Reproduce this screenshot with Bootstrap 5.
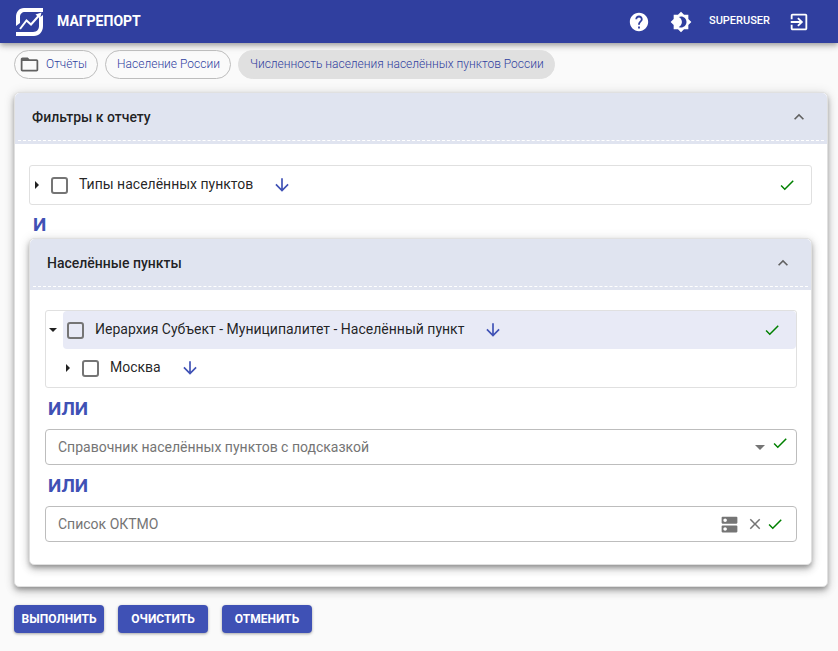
<!DOCTYPE html>
<html lang="ru">
<head>
<meta charset="utf-8">
<meta name="viewport" content="width=device-width, initial-scale=1">
<title>Магрепорт</title>
<link href="https://cdn.jsdelivr.net/npm/bootstrap@5.3.0/dist/css/bootstrap.min.css" rel="stylesheet">
<style>
body{font-family:Roboto,"Liberation Sans",sans-serif;font-size:14px;line-height:20px;background:#fafafa;color:rgba(0,0,0,.87)}
svg{display:block;flex:none;fill:currentColor}
button{font:inherit}
.topbar{height:43px;background:#303f9f;color:#fff;padding:0 28px 0 14px;box-shadow:0 2px 4px -1px rgba(0,0,0,.2),0 4px 5px rgba(0,0,0,.14),0 1px 10px rgba(0,0,0,.12)}
.brand-name{font-size:14px;font-weight:700;color:#fff;padding-left:13px;padding-bottom:2px}
.user-name{font-size:11px;font-weight:500;margin:0 18px 0 17px;padding-bottom:2px}
.bare{border:0;background:none;padding:0;color:inherit}
.crumbs{padding:7px 14px 0;gap:7px}
.crumb{height:29px;padding:0 10px 2px 11px;border:1px solid #bdbdbd;border-radius:15px;font-size:12px;font-weight:300;color:#303f9f;text-decoration:none}
.crumb-folder{padding:0 10px 2px 4px;gap:6px}
.crumb-folder svg{color:#616161;margin-top:2px}
.crumb-current{background:#e0e0e0;border-color:#e0e0e0}
.page-body{padding:13px 10px 0 14px}
.panel{background:#fff;border:1px solid #e0e0e0;border-radius:5px;box-shadow:0 3px 5px -1px rgba(0,0,0,.3),0 5px 8px rgba(0,0,0,.16),0 1px 12px rgba(0,0,0,.12)}
.panel-head{height:51px;background:#e0e4f0;border-radius:5px 5px 0 0;padding:0 3px 3px}
.panel-toggle{height:48px;padding:0 15px 0 14px;border-bottom:1px dashed #fff;font-weight:500}
.panel-toggle svg{color:#616161}
.outer-body{padding:21px 15px 21px 14px}
.inner-body{padding:20px 14px 22px 15px}
.tree{border:1px solid #e0e0e0;border-radius:3px}
.tree-row{height:38px}
.tree-item{border-radius:4px;height:38px;padding:0 15px 0 4px}
.tree-item.picked{background:#e8eaf6}
.twisty{width:17px;height:20px;padding-right:4px}
.twisty svg{margin:auto}
.tick-box{appearance:none;width:17px;height:17px;border:2px solid #757575;border-radius:3px;margin:0 11px 0 0;background:#fff;flex:none}
.picked .tick-box{background:transparent}
.tree-row label{padding-bottom:2px}
.tree-row .arrow{color:#3f51b5;margin-left:19px}
.child{padding-left:15px}
.ok{color:#008000}
.joiner{color:#3f51b5;font-size:19px;line-height:20px;font-weight:700;padding:11px 3px 10px}
.joiner-and{padding:10px 4px 3px}
.field{height:36px;border:1px solid #bdbdbd;border-radius:4px;padding:0 12px}
.field-select{padding-right:7px}
.field input{border:0;outline:0;background:none;padding:0;min-width:0;color:inherit}
.field input::placeholder{color:#757575;opacity:1}
.field button{color:#757575}
.field .gap-after{margin-right:6px}
.field .gap-small{margin-right:2px}
.actions{padding:18px 14px;gap:14px}
.act{min-width:90px;height:28px;padding:0 6px;border-radius:4px;background:#3f51b5;color:#fff;font-size:12px;font-weight:700;box-shadow:0 1px 3px rgba(0,0,0,.35)}
.act:hover{background:#303f9f;color:#fff}
</style>
<script src="https://cdn.jsdelivr.net/npm/bootstrap@5.3.0/dist/js/bootstrap.bundle.min.js"></script>
</head>
<body>
<svg class="d-none">
<symbol id="i-down" viewBox="0 0 24 24"><path d="M20 12l-1.41-1.41L13 16.17V4h-2v12.17l-5.58-5.59L4 12l8 8 8-8z"/></symbol>
<symbol id="i-ok" viewBox="0 0 24 24"><path d="M9 16.17L4.83 12l-1.42 1.41L9 19 21 7l-1.41-1.41z"/></symbol>
<symbol id="i-up" viewBox="0 0 24 24"><path d="M12 8l-6 6 1.41 1.41L12 10.83l4.59 4.58L18 14z"/></symbol>
</svg>
<header class="topbar d-flex align-items-center">
  <a href="#" class="d-flex align-items-center text-decoration-none text-white">
    <svg width="30" height="30" viewBox="0 0 30 30"><path d="M2 19V10C2 5 5 1 10 1H29V5H11C8 5 6 7 6 10V16ZM25 11L29 8V19C29 25 25 29 20 29H2V25H19C23 25 25 22 25 19Z"/><path fill="none" stroke="#fff" stroke-width="2" d="M6 22L12.500 13.500L17 17.500L25 8.500"/><path d="M21.500 7.500l6-2-1.500 6z"/></svg>
    <span class="brand-name">МАГРЕПОРТ</span>
  </a>
  <div class="d-flex align-items-center ms-auto">
    <button class="bare" aria-label="Справка"><svg width="22" height="22" viewBox="0 0 24 24"><path d="M12 2C6.480 2 2 6.480 2 12s4.480 10 10 10 10-4.480 10-10S17.520 2 12 2zm1 17h-2v-2h2v2zm2.070-7.750l-.9.920C13.450 12.900 13 13.500 13 15h-2v-.5c0-1.100.45-2.100 1.170-2.830l1.240-1.260c.37-.36.59-.86.59-1.410 0-1.100-.9-2-2-2s-2 .9-2 2H8c0-2.210 1.790-4 4-4s4 1.790 4 4c0 .88-.36 1.680-.93 2.250z"/></svg></button>
    <button class="bare ms-3 ps-1" aria-label="Тема"><svg width="22" height="22" viewBox="0 0 24 24"><path d="M20 8.690V4h-4.690L12 .69 8.690 4H4v4.690L.69 12 4 15.310V20h4.690L12 23.310 15.310 20H20v-4.690L23.310 12 20 8.690zM12 18c-.89 0-1.740-.2-2.500-.55C11.560 16.500 13 14.420 13 12s-1.440-4.500-3.500-5.450C10.260 6.200 11.110 6 12 6c3.310 0 6 2.690 6 6s-2.690 6-6 6z"/></svg></button>
    <span class="user-name">SUPERUSER</span>
    <button class="bare" aria-label="Выход"><svg width="22" height="22" viewBox="0 0 24 24"><path d="M10.090 15.590L11.500 17l5-5-5-5-1.410 1.410L12.670 11H3v2h9.670l-2.580 2.590zM19 3H5c-1.110 0-2 .9-2 2v4h2V5h14v14H5v-4H3v4c0 1.100.89 2 2 2h14c1.100 0 2-.9 2-2V5c0-1.100-.9-2-2-2z"/></svg></button>
  </div>
</header>
<nav class="crumbs d-flex flex-wrap" aria-label="Путь">
  <a href="#" class="crumb crumb-folder d-flex align-items-center"><svg width="21" height="21" viewBox="0 0 24 24"><path d="M20 6h-8l-2-2H4c-1.100 0-1.990.9-1.990 2L2 18c0 1.100.9 2 2 2h16c1.100 0 2-.9 2-2V8c0-1.100-.9-2-2-2zm0 12H4V8h16v10z"/></svg>Отчёты</a>
  <a href="#" class="crumb d-flex align-items-center">Население России</a>
  <a href="#" class="crumb crumb-current d-flex align-items-center" aria-current="page">Численность населения населённых пунктов России</a>
</nav>
<main>
<div class="page-body">
<section class="panel">
  <div class="panel-head"><button class="bare panel-toggle w-100 d-flex align-items-center justify-content-between" aria-expanded="true">Фильтры к отчету<svg width="20" height="20"><use href="#i-up"/></svg></button></div>
  <div class="outer-body">
    <div class="tree"><div class="tree-row d-flex align-items-center">
      <button class="bare twisty" aria-label="Развернуть"><svg width="4" height="8" viewBox="0 0 4 8"><path d="M0 0l4 4-4 4z"/></svg></button>
      <div class="tree-item flex-grow-1 d-flex align-items-center"><input class="tick-box" type="checkbox" id="types"><label for="types">Типы населённых пунктов</label>
      <button class="bare arrow" aria-label="Загрузить типы"><svg width="20" height="20"><use href="#i-down"/></svg></button><svg class="ok ms-auto" width="18" height="18"><use href="#i-ok"/></svg></div>
    </div></div>
    <div class="joiner joiner-and">И</div>
    <section class="panel">
      <div class="panel-head"><button class="bare panel-toggle w-100 d-flex align-items-center justify-content-between" aria-expanded="true">Населённые пункты<svg width="20" height="20"><use href="#i-up"/></svg></button></div>
      <div class="inner-body">
        <div class="tree">
          <div class="tree-row d-flex align-items-center">
            <button class="bare twisty" aria-label="Свернуть"><svg width="8" height="4" viewBox="0 0 8 4"><path d="M0 0h8L4 4z"/></svg></button>
            <div class="tree-item picked flex-grow-1 d-flex align-items-center"><input class="tick-box" type="checkbox" id="hier"><label for="hier">Иерархия Субъект - Муниципалитет - Населённый пункт</label>
            <button class="bare arrow" aria-label="Загрузить иерархию"><svg width="20" height="20"><use href="#i-down"/></svg></button><svg class="ok ms-auto" width="18" height="18"><use href="#i-ok"/></svg></div>
          </div>
          <div class="tree-row child d-flex align-items-center">
            <button class="bare twisty" aria-label="Развернуть"><svg width="4" height="8" viewBox="0 0 4 8"><path d="M0 0l4 4-4 4z"/></svg></button>
            <div class="tree-item flex-grow-1 d-flex align-items-center"><input class="tick-box" type="checkbox" id="msk"><label for="msk">Москва</label>
            <button class="bare arrow" aria-label="Загрузить Москву"><svg width="20" height="20"><use href="#i-down"/></svg></button></div>
          </div>
        </div>
        <div class="joiner">ИЛИ</div>
        <div class="field field-select d-flex align-items-center">
          <input class="flex-grow-1" type="text" placeholder="Справочник населённых пунктов с подсказкой" aria-label="Справочник населённых пунктов с подсказкой">
          <button class="bare gap-after" aria-label="Открыть список"><svg width="10" height="5" viewBox="0 0 10 5"><path d="M0 0h10L5 5z"/></svg></button>
          <svg class="ok mb-2" width="18" height="18"><use href="#i-ok"/></svg>
        </div>
        <div class="joiner">ИЛИ</div>
        <div class="field d-flex align-items-center">
          <input class="flex-grow-1" type="text" placeholder="Список ОКТМО" aria-label="Список ОКТМО">
          <button class="bare gap-after" aria-label="Хранилище"><svg width="21" height="21" viewBox="0 0 24 24"><path d="M20 13H4c-.55 0-1 .45-1 1v6c0 .55.45 1 1 1h16c.55 0 1-.45 1-1v-6c0-.55-.45-1-1-1zM7 19c-1.100 0-2-.9-2-2s.9-2 2-2 2 .9 2 2-.9 2-2 2zM20 3H4c-.55 0-1 .45-1 1v6c0 .55.45 1 1 1h16c.55 0 1-.45 1-1V4c0-.55-.45-1-1-1zM7 9c-1.100 0-2-.9-2-2s.9-2 2-2 2 .9 2 2-.9 2-2 2z"/></svg></button>
          <button class="bare gap-small" aria-label="Очистить поле"><svg width="18" height="18" viewBox="0 0 24 24"><path d="M19 6.410L17.590 5 12 10.590 6.410 5 5 6.410 10.590 12 5 17.590 6.410 19 12 13.410 17.590 19 19 17.590 13.410 12z"/></svg></button>
          <svg class="ok" width="18" height="18"><use href="#i-ok"/></svg>
        </div>
      </div>
    </section>
  </div>
</section>
</div>
<div class="actions d-flex">
  <button class="btn act">ВЫПОЛНИТЬ</button><button class="btn act">ОЧИСТИТЬ</button><button class="btn act">ОТМЕНИТЬ</button>
</div>
</main>
</body>
</html>
